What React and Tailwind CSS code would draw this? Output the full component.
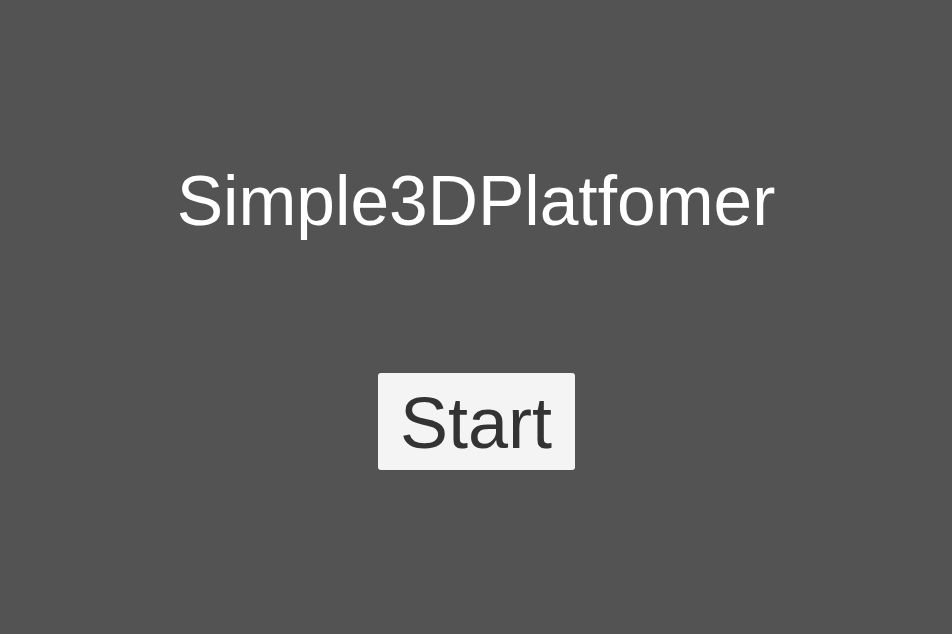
export default function App() {
  return (
    <div
      className="w-[952px] h-[634px] bg-[#535353] flex flex-col items-center"
      style={{ fontFamily: '"Liberation Sans", Arial, sans-serif' }}
    >
      {/* Title */}
      <h1 className="mt-[167px] text-[69.5px] leading-none text-white font-normal">
        Simple3DPlatfomer
      </h1>

      {/* Start button */}
      <button className="mt-[136px] w-[197px] h-[97px] rounded-[3px] bg-[#f4f4f4] text-[#333333] text-[72px] leading-none pt-[4px] flex items-center justify-center">
        Start
      </button>
    </div>
  );
}
